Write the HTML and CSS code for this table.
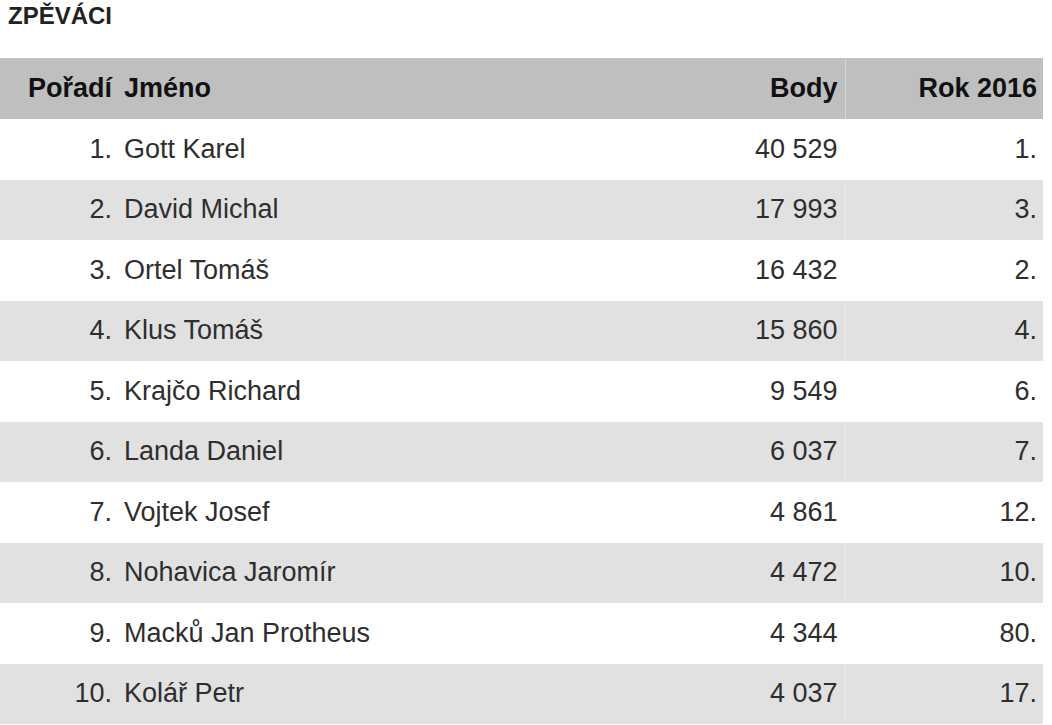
FILE: index.html
```html
<!DOCTYPE html>
<html lang="cs">
<head>
<meta charset="utf-8">
<title>Zpěváci</title>
<link rel="stylesheet" href="styles.css">
</head>
<body>
<h1 class="title">ZPĚVÁCI</h1>
<table class="rank">
  <thead>
    <tr><th class="c-pos">Pořadí</th><th class="c-name">Jméno</th><th class="c-pts">Body</th><th class="c-year">Rok 2016</th></tr>
  </thead>
  <tbody>
    <tr><td class="c-pos">1.</td><td class="c-name">Gott Karel</td><td class="c-pts">40 529</td><td class="c-year">1.</td></tr>
    <tr><td class="c-pos">2.</td><td class="c-name">David Michal</td><td class="c-pts">17 993</td><td class="c-year">3.</td></tr>
    <tr><td class="c-pos">3.</td><td class="c-name">Ortel Tomáš</td><td class="c-pts">16 432</td><td class="c-year">2.</td></tr>
    <tr><td class="c-pos">4.</td><td class="c-name">Klus Tomáš</td><td class="c-pts">15 860</td><td class="c-year">4.</td></tr>
    <tr><td class="c-pos">5.</td><td class="c-name">Krajčo Richard</td><td class="c-pts">9 549</td><td class="c-year">6.</td></tr>
    <tr><td class="c-pos">6.</td><td class="c-name">Landa Daniel</td><td class="c-pts">6 037</td><td class="c-year">7.</td></tr>
    <tr><td class="c-pos">7.</td><td class="c-name">Vojtek Josef</td><td class="c-pts">4 861</td><td class="c-year">12.</td></tr>
    <tr><td class="c-pos">8.</td><td class="c-name">Nohavica Jaromír</td><td class="c-pts">4 472</td><td class="c-year">10.</td></tr>
    <tr><td class="c-pos">9.</td><td class="c-name">Macků Jan Protheus</td><td class="c-pts">4 344</td><td class="c-year">80.</td></tr>
    <tr><td class="c-pos">10.</td><td class="c-name">Kolář Petr</td><td class="c-pts">4 037</td><td class="c-year">17.</td></tr>
  </tbody>
</table>
</body>
</html>
```
FILE: styles.css
```css
html, body {
  margin: 0;
  padding: 0;
  background: #ffffff;
  font-family: "Liberation Sans", Arial, sans-serif;
}

.title {
  margin: 0;
  padding: 2px 0 0 8px;
  font-size: 24px;
  line-height: 28px;
  font-weight: bold;
  color: #222222;
}

.rank {
  margin-top: 28px;
  width: 1043px;
  border-collapse: collapse;
  table-layout: fixed;
  font-size: 27px;
}

.rank th,
.rank td {
  padding: 0;
  vertical-align: middle;
  white-space: nowrap;
  box-sizing: border-box;
}

.rank th {
  height: 61px;
  color: #111111;
  font-weight: bold;
}

.rank td {
  height: 60.5px;
  color: #2e2e2e;
}

.rank thead tr {
  background: #bfbfbf;
}

.rank tbody tr:nth-child(even) {
  background: #e1e1e1;
}

.c-pos {
  width: 117px;
  text-align: right;
  padding-right: 5px !important;
}

.c-name {
  text-align: left;
  padding-left: 7px !important;
}

.c-pts {
  width: 200px;
  text-align: right;
  padding-right: 7px !important;
}

.c-year {
  width: 198px;
  text-align: right;
  padding-right: 6px !important;
  border-left: 1px solid rgba(255, 255, 255, 0.35);
}
```
